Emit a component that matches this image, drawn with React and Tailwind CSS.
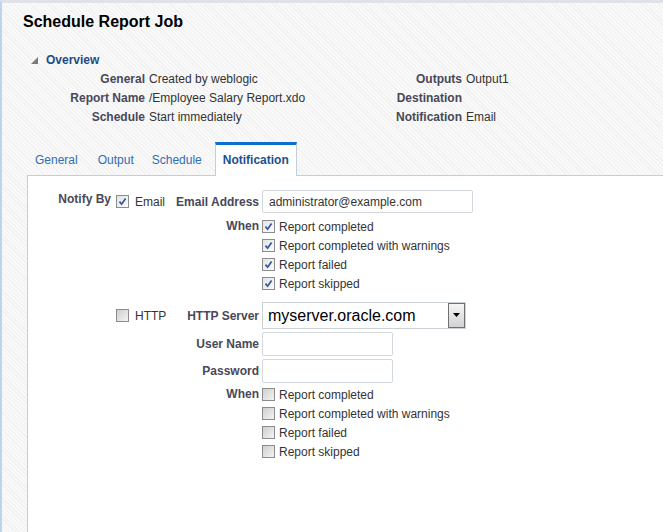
import React from "react"

const overview = [
  ["General", "Created by weblogic", "Outputs", "Output1"],
  ["Report Name", "/Employee Salary Report.xdo", "Destination", ""],
  ["Schedule", "Start immediately", "Notification", "Email"],
]

const tabs = [
  { name: "General", cls: "" },
  { name: "Output", cls: "ml-[2px]" },
  { name: "Schedule", cls: "" },
  { name: "Notification", cls: "ml-[4px]", active: true },
]

const whenItems = ["Report completed", "Report completed with warnings", "Report failed", "Report skipped"]

const Checkbox = ({ checked }) => (
  <span
    className={`w-[13px] h-[13px] shrink-0 border border-[#8c8c8c] flex items-center justify-center ${
      checked ? "bg-gradient-to-br from-[#e4e4e4] to-[#fbfbfb]" : "bg-gradient-to-br from-[#cfcfcf] to-[#f4f4f4]"
    }`}
  >
    {checked && (
      <svg width="9" height="9" viewBox="0 0 9 9">
        <path d="M1.5 4.6 L3.6 7.2 L7.6 1.4" fill="none" stroke="#2f55a4" strokeWidth="1.7" />
      </svg>
    )}
  </span>
)

const WhenList = ({ checked }) => (
  <div className="flex">
    <div className="w-[231px] text-right font-bold text-[#484858] leading-[19px]">When</div>
    <div className="ml-[3px] flex flex-col">
      {whenItems.map((item) => (
        <label key={item} className="flex items-center h-[19px] gap-[4px] text-[#333]">
          <Checkbox checked={checked} />
          <span>{item}</span>
        </label>
      ))}
    </div>
  </div>
)

const TextInput = ({ width, height, value }) => (
  <div
    className={`${width} ${height} bg-white border border-[#d3d8de] rounded-[2px] pl-[6px] flex items-center text-[#333]`}
  >
    {value}
  </div>
)

export default function App() {
  return (
    <div className="w-[663px] h-[532px] overflow-hidden flex flex-col border-t-[3px] border-t-[#dfe3e8] border-l-[2px] border-l-[#bed4ee] bg-[repeating-linear-gradient(45deg,#f1f1f1_0px,#f1f1f1_1px,#f9f9f9_1px,#f9f9f9_3px)] text-[12px] font-['Liberation_Sans',Arial,sans-serif]">
      <h1 className="ml-[21px] mt-[9px] text-[16px] leading-[20px] font-bold text-black">Schedule Report Job</h1>

      {/* overview */}
      <div className="mt-[20px] ml-[29px] flex items-center h-[16px]">
        <svg width="7" height="7" viewBox="0 0 7 7">
          <polygon points="0,7 7,7 7,0" fill="#7a7a7a" />
        </svg>
        <span className="ml-[8px] font-bold text-[#1d4b84]">Overview</span>
      </div>
      <div className="mt-[2px]">
        {overview.map(([l1, v1, l2, v2]) => (
          <div key={l1} className="flex h-[19px] leading-[19px]">
            <div className="w-[143px] text-right font-bold text-[#484858]">{l1}</div>
            <div className="ml-[4px] w-[233px] text-[#333]">{v1}</div>
            <div className="w-[80px] text-right font-bold text-[#484858]">{l2}</div>
            <div className="ml-[4px] text-[#333]">{v2}</div>
          </div>
        ))}
      </div>

      {/* tabs */}
      <div className="mt-[15px] pl-[24px] flex h-[33px]">
        {tabs.map((t) => (
          <div
            key={t.name}
            className={`${t.cls} h-[34px] border-t-[3px] border-x leading-[30px] ${
              t.active
                ? "relative z-10 px-[7px] bg-white border-t-[#0b6fcf] border-x-[#c5cdd6] font-bold text-[#1e4f8c]"
                : "px-[8px] border-transparent text-[#2f6db5]"
            }`}
          >
            {t.name}
          </div>
        ))}
      </div>

      {/* panel */}
      <div className="ml-[25px] flex-1 bg-white border-l border-t border-[#c5cdd6] pt-[14px]">
        <div className="flex items-center h-[23px]">
          <div className="w-[83px] self-start text-right font-bold text-[#484858] leading-[19px]">Notify By</div>
          <div className="ml-[5px] w-[54px] flex items-center gap-[6px] text-[#333]">
            <Checkbox checked />
            <span>Email</span>
          </div>
          <div className="w-[89px] text-right font-bold text-[#484858]">Email Address</div>
          <div className="ml-[3px]">
            <TextInput width="w-[211px]" height="h-[23px]" value="administrator@example.com" />
          </div>
        </div>
        <div className="mt-[4px]">
          <WhenList checked />
        </div>

        <div className="mt-[9px] flex items-center h-[27px]">
          <div className="w-[83px]" />
          <div className="ml-[5px] w-[54px] flex items-center gap-[6px] text-[#333]">
            <Checkbox />
            <span>HTTP</span>
          </div>
          <div className="w-[89px] text-right font-bold text-[#484858]">HTTP Server</div>
          <div className="ml-[3px] w-[204px] h-[27px] bg-white border border-[#ccd1d7] flex items-stretch">
            <span className="flex-1 pl-[5px] text-[16px] leading-[25px] text-black">myserver.oracle.com</span>
            <span className="w-[17px] border border-[#707070] bg-gradient-to-b from-[#f6f6f6] to-[#d2d2d2] flex items-start justify-center pt-[9px]">
              <svg width="7" height="4" viewBox="0 0 7 4">
                <polygon points="0,0 7,0 3.5,4" fill="#000" />
              </svg>
            </span>
          </div>
        </div>
        <div className="mt-[3px] flex items-center h-[24px]">
          <div className="w-[231px] text-right font-bold text-[#484858]">User Name</div>
          <div className="ml-[3px]">
            <TextInput width="w-[131px]" height="h-[24px]" value="" />
          </div>
        </div>
        <div className="mt-[3px] flex items-center h-[24px]">
          <div className="w-[231px] text-right font-bold text-[#484858]">Password</div>
          <div className="ml-[3px]">
            <TextInput width="w-[131px]" height="h-[24px]" value="" />
          </div>
        </div>
        <div className="mt-[2px]">
          <WhenList />
        </div>
      </div>
    </div>
  )
}
